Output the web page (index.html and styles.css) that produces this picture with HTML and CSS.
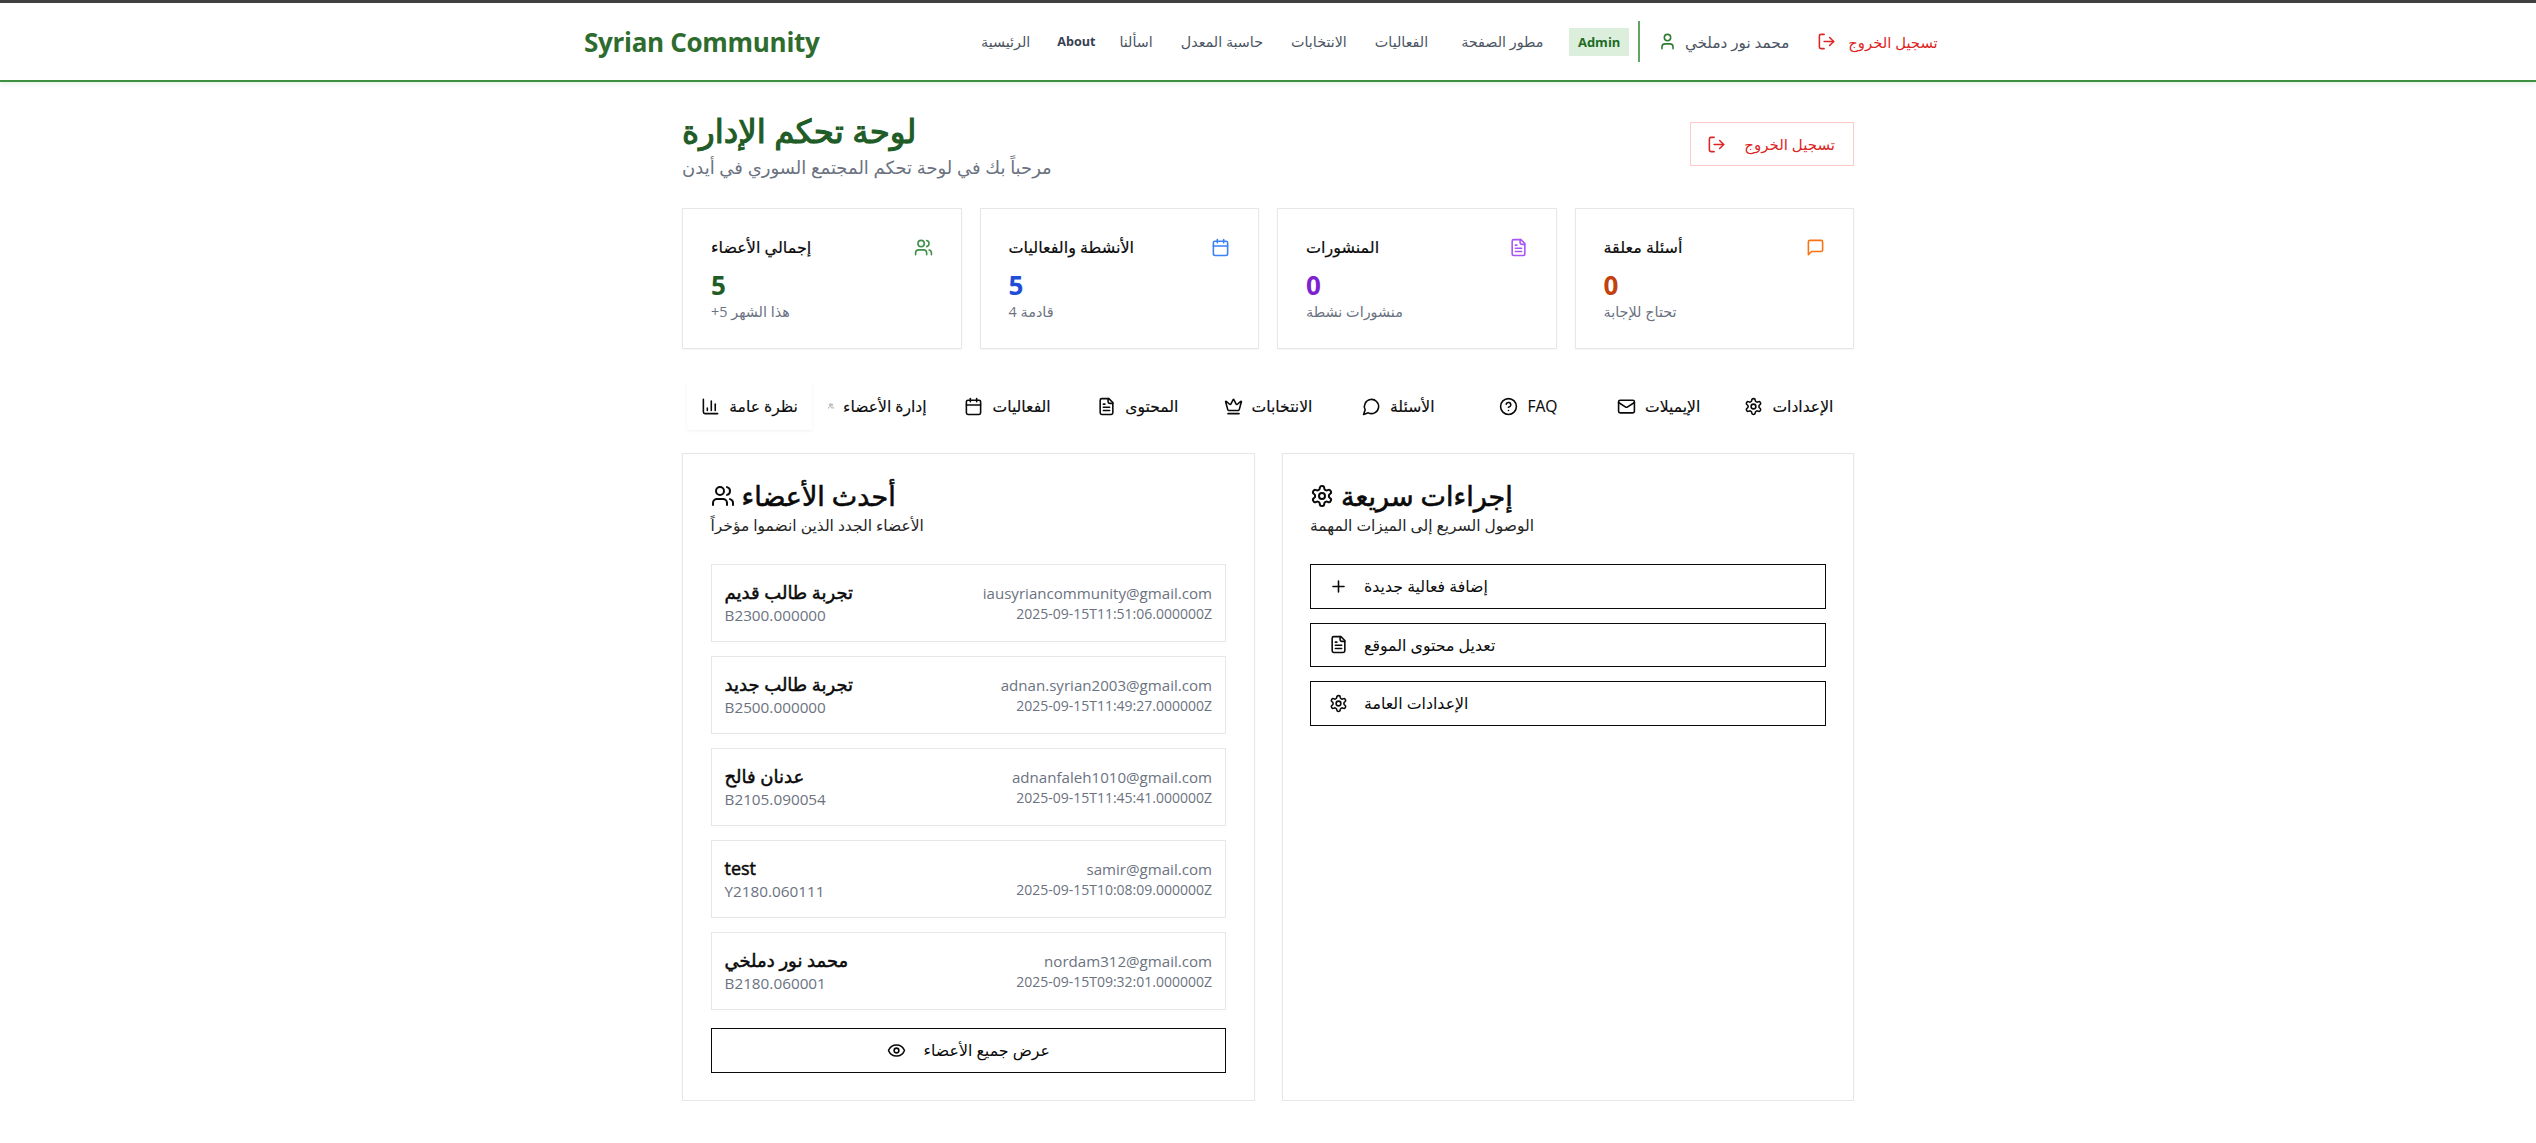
FILE: index.html
```html
<!DOCTYPE html>
<html lang="ar">
<head>
  <meta charset="UTF-8">
  <title>لوحة تحكم الإدارة</title>
  <link rel="stylesheet" href="styles.css">
</head>
<body>
  <svg class="sprite" xmlns="http://www.w3.org/2000/svg">
    <symbol id="i-users" viewBox="0 0 24 24"><path d="M16 21v-2a4 4 0 0 0-4-4H6a4 4 0 0 0-4 4v2"/><circle cx="9" cy="7" r="4"/><path d="M22 21v-2a4 4 0 0 0-3-3.87"/><path d="M16 3.13a4 4 0 0 1 0 7.75"/></symbol>
    <symbol id="i-user" viewBox="0 0 24 24"><path d="M19 21v-2a4 4 0 0 0-4-4H9a4 4 0 0 0-4 4v2"/><circle cx="12" cy="7" r="4"/></symbol>
    <symbol id="i-logout" viewBox="0 0 24 24"><path d="M9 21H5a2 2 0 0 1-2-2V5a2 2 0 0 1 2-2h4"/><path d="m16 17 5-5-5-5"/><path d="M21 12H9"/></symbol>
    <symbol id="i-calendar" viewBox="0 0 24 24"><path d="M8 2v4"/><path d="M16 2v4"/><rect x="3" y="4" width="18" height="18" rx="2"/><path d="M3 10h18"/></symbol>
    <symbol id="i-file" viewBox="0 0 24 24"><path d="M15 2H6a2 2 0 0 0-2 2v16a2 2 0 0 0 2 2h12a2 2 0 0 0 2-2V7Z"/><path d="M14 2v4a2 2 0 0 0 2 2h4"/><path d="M10 9H8"/><path d="M16 13H8"/><path d="M16 17H8"/></symbol>
    <symbol id="i-square" viewBox="0 0 24 24"><path d="M21 15a2 2 0 0 1-2 2H7l-4 4V5a2 2 0 0 1 2-2h14a2 2 0 0 1 2 2z"/></symbol>
    <symbol id="i-circle" viewBox="0 0 24 24"><path d="M7.9 20A9 9 0 1 0 4 16.1L2 22Z"/></symbol>
    <symbol id="i-chart" viewBox="0 0 24 24"><path d="M3 3v16a2 2 0 0 0 2 2h16"/><path d="M18 17V9"/><path d="M13 17V5"/><path d="M8 17v-3"/></symbol>
    <symbol id="i-crown" viewBox="0 0 24 24"><path d="M11.562 3.266a.5.5 0 0 1 .876 0L15.39 8.87a1 1 0 0 0 1.516.294L21.183 5.5a.5.5 0 0 1 .798.519l-2.834 10.246a1 1 0 0 1-.956.734H5.81a1 1 0 0 1-.957-.734L2.02 6.02a.5.5 0 0 1 .798-.519l4.276 3.664a1 1 0 0 0 1.516-.294z"/><path d="M5 21h14"/></symbol>
    <symbol id="i-help" viewBox="0 0 24 24"><circle cx="12" cy="12" r="10"/><path d="M9.09 9a3 3 0 0 1 5.83 1c0 2-3 3-3 3"/><path d="M12 17h.01"/></symbol>
    <symbol id="i-mail" viewBox="0 0 24 24"><rect x="2" y="4" width="20" height="16" rx="2"/><path d="m22 7-8.97 5.7a1.94 1.94 0 0 1-2.06 0L2 7"/></symbol>
    <symbol id="i-settings" viewBox="0 0 24 24"><path d="M12.22 2h-.44a2 2 0 0 0-2 2v.18a2 2 0 0 1-1 1.73l-.43.25a2 2 0 0 1-2 0l-.15-.08a2 2 0 0 0-2.73.73l-.22.38a2 2 0 0 0 .73 2.73l.15.1a2 2 0 0 1 1 1.72v.51a2 2 0 0 1-1 1.74l-.15.09a2 2 0 0 0-.73 2.73l.22.38a2 2 0 0 0 2.73.73l.15-.08a2 2 0 0 1 2 0l.43.25a2 2 0 0 1 1 1.73V20a2 2 0 0 0 2 2h.44a2 2 0 0 0 2-2v-.18a2 2 0 0 1 1-1.73l.43-.25a2 2 0 0 1 2 0l.15.08a2 2 0 0 0 2.73-.73l.22-.39a2 2 0 0 0-.73-2.73l-.15-.08a2 2 0 0 1-1-1.74v-.5a2 2 0 0 1 1-1.74l.15-.09a2 2 0 0 0 .73-2.73l-.22-.38a2 2 0 0 0-2.73-.73l-.15.08a2 2 0 0 1-2 0l-.43-.25a2 2 0 0 1-1-1.73V4a2 2 0 0 0-2-2z"/><circle cx="12" cy="12" r="3"/></symbol>
    <symbol id="i-plus" viewBox="0 0 24 24"><path d="M5 12h14"/><path d="M12 5v14"/></symbol>
    <symbol id="i-eye" viewBox="0 0 24 24"><path d="M2.062 12.348a1 1 0 0 1 0-.696 10.75 10.75 0 0 1 19.876 0 1 1 0 0 1 0 .696 10.75 10.75 0 0 1-19.876 0"/><circle cx="12" cy="12" r="3"/></symbol>
  </svg>

  <!-- الشريط العلوي -->
  <header class="site-header">
    <div class="header-inner">
      <a class="logo" href="#">Syrian Community</a>
      <nav class="main-nav">
        <a href="#">الرئيسية</a>
        <a class="nav-strong" href="#">About</a>
        <a href="#">اسألنا</a>
        <a href="#">حاسبة المعدل</a>
        <a href="#">الانتخابات</a>
        <a href="#">الفعاليات</a>
        <a class="nav-dev" href="#">مطور الصفحة</a>
      </nav>
      <span class="role-badge">Admin</span>
      <div class="user-box">
        <svg class="icon icon-user"><use href="#i-user"/></svg>
        <span class="user-name">محمد نور دملخي</span>
      </div>
      <a class="header-logout" href="#">
        <svg class="icon"><use href="#i-logout"/></svg>
        <span>تسجيل الخروج</span>
      </a>
    </div>
  </header>

  <main class="container">
    <section class="page-head">
      <div>
        <h1>لوحة تحكم الإدارة</h1>
        <p class="page-sub">مرحباً بك في لوحة تحكم المجتمع السوري في أيدن</p>
      </div>
      <a class="logout-btn" href="#">
        <svg class="icon"><use href="#i-logout"/></svg>
        <span>تسجيل الخروج</span>
      </a>
    </section>

    <!-- البطاقات -->
    <section class="stats">
      <div class="stat-card">
        <div class="stat-top"><span>إجمالي الأعضاء</span><svg class="icon c-green"><use href="#i-users"/></svg></div>
        <div class="stat-num n-green">5</div>
        <div class="stat-note">+5 هذا الشهر</div>
      </div>
      <div class="stat-card">
        <div class="stat-top"><span>الأنشطة والفعاليات</span><svg class="icon c-blue"><use href="#i-calendar"/></svg></div>
        <div class="stat-num n-blue">5</div>
        <div class="stat-note">4 قادمة</div>
      </div>
      <div class="stat-card">
        <div class="stat-top"><span>المنشورات</span><svg class="icon c-purple"><use href="#i-file"/></svg></div>
        <div class="stat-num n-purple">0</div>
        <div class="stat-note">منشورات نشطة</div>
      </div>
      <div class="stat-card">
        <div class="stat-top"><span>أسئلة معلقة</span><svg class="icon c-orange"><use href="#i-square"/></svg></div>
        <div class="stat-num n-orange">0</div>
        <div class="stat-note">تحتاج للإجابة</div>
      </div>
    </section>

    <!-- التبويبات -->
    <nav class="tabs">
      <a class="tab active" href="#"><svg class="icon"><use href="#i-chart"/></svg><span>نظرة عامة</span></a>
      <a class="tab" href="#"><svg class="icon icon-tiny"><use href="#i-users"/></svg><span>إدارة الأعضاء</span></a>
      <a class="tab" href="#"><svg class="icon"><use href="#i-calendar"/></svg><span>الفعاليات</span></a>
      <a class="tab" href="#"><svg class="icon"><use href="#i-file"/></svg><span>المحتوى</span></a>
      <a class="tab" href="#"><svg class="icon"><use href="#i-crown"/></svg><span>الانتخابات</span></a>
      <a class="tab" href="#"><svg class="icon"><use href="#i-circle"/></svg><span>الأسئلة</span></a>
      <a class="tab" href="#"><svg class="icon"><use href="#i-help"/></svg><span>FAQ</span></a>
      <a class="tab" href="#"><svg class="icon"><use href="#i-mail"/></svg><span>الإيميلات</span></a>
      <a class="tab" href="#"><svg class="icon"><use href="#i-settings"/></svg><span>الإعدادات</span></a>
    </nav>

    <section class="panels">
      <div class="panel">
        <h2><svg class="icon"><use href="#i-users"/></svg><span>أحدث الأعضاء</span></h2>
        <p class="panel-sub">الأعضاء الجدد الذين انضموا مؤخراً</p>
        <div class="member-list">
          <div class="member">
            <div><div class="member-name">تجربة طالب قديم</div><div class="member-code">B2300.000000</div></div>
            <div class="member-meta"><div class="member-mail">iausyriancommunity@gmail.com</div><div class="member-date">2025-09-15T11:51:06.000000Z</div></div>
          </div>
          <div class="member">
            <div><div class="member-name">تجربة طالب جديد</div><div class="member-code">B2500.000000</div></div>
            <div class="member-meta"><div class="member-mail">adnan.syrian2003@gmail.com</div><div class="member-date">2025-09-15T11:49:27.000000Z</div></div>
          </div>
          <div class="member">
            <div><div class="member-name">عدنان فالح</div><div class="member-code">B2105.090054</div></div>
            <div class="member-meta"><div class="member-mail">adnanfaleh1010@gmail.com</div><div class="member-date">2025-09-15T11:45:41.000000Z</div></div>
          </div>
          <div class="member">
            <div><div class="member-name">test</div><div class="member-code">Y2180.060111</div></div>
            <div class="member-meta"><div class="member-mail">samir@gmail.com</div><div class="member-date">2025-09-15T10:08:09.000000Z</div></div>
          </div>
          <div class="member">
            <div><div class="member-name">محمد نور دملخي</div><div class="member-code">B2180.060001</div></div>
            <div class="member-meta"><div class="member-mail">nordam312@gmail.com</div><div class="member-date">2025-09-15T09:32:01.000000Z</div></div>
          </div>
        </div>
        <a class="outline-btn center" href="#"><svg class="icon"><use href="#i-eye"/></svg><span>عرض جميع الأعضاء</span></a>
      </div>

      <div class="panel">
        <h2><svg class="icon"><use href="#i-settings"/></svg><span>إجراءات سريعة</span></h2>
        <p class="panel-sub">الوصول السريع إلى الميزات المهمة</p>
        <div class="action-list">
          <a class="outline-btn" href="#"><svg class="icon"><use href="#i-plus"/></svg><span>إضافة فعالية جديدة</span></a>
          <a class="outline-btn" href="#"><svg class="icon"><use href="#i-file"/></svg><span>تعديل محتوى الموقع</span></a>
          <a class="outline-btn" href="#"><svg class="icon"><use href="#i-settings"/></svg><span>الإعدادات العامة</span></a>
        </div>
      </div>
    </section>
  </main>
</body>
</html>
```

FILE: styles.css
```css
/* عام */
* {
  box-sizing: border-box;
}

body {
  margin: 0;
  background-color: #FFFFFF;
  color: #0A0A0A;
  font-family: "Open Sans", "DejaVu Sans", sans-serif;
  font-size: 15px;
}

a {
  color: inherit;
  text-decoration: none;
}

h1, h2, p {
  margin: 0;
}

.sprite {
  display: none;
}

.icon {
  width: 19px;
  height: 19px;
  flex: none;
  fill: none;
  stroke: currentColor;
  stroke-width: 2;
  stroke-linecap: round;
  stroke-linejoin: round;
}

/* الشريط العلوي */
.site-header {
  height: 82px;
  border-top: 3px solid #404040;
  border-bottom: 2px solid #3F9142;
  box-shadow: 0 2px 4px rgba(63, 145, 66, 0.12);
}

.header-inner {
  display: flex;
  align-items: center;
  height: 100%;
  padding-left: 584px;
}

.logo {
  width: 397px;
  font-size: 26px;
  font-weight: 700;
  letter-spacing: -0.3px;
  color: #2E6B2E;
}

.main-nav {
  display: flex;
  align-items: center;
  gap: 28px;
  font-size: 14.3px;
  color: #4B5563;
}

.nav-strong {
  margin-left: -1px;
  margin-right: -4px;
  font-size: 12.6px;
  font-weight: 700;
  color: #374151;
}

.nav-dev {
  margin-left: 5px;
}

.role-badge {
  margin-left: 26px;
  padding: 5px 8.5px;
  background-color: #DCEFDC;
  color: #1F6B24;
  font-size: 13px;
  font-weight: 700;
}

.user-box {
  display: flex;
  align-items: center;
  gap: 8px;
  height: 41px;
  margin-left: 9px;
  padding-left: 18px;
  border-left: 2px solid #5FA463;
  color: #4B5563;
  font-size: 15.2px;
}

.icon-user {
  color: #2E7D32;
}

.header-logout {
  display: flex;
  align-items: center;
  gap: 12px;
  margin-left: 28px;
  color: #DC2626;
  font-size: 14.8px;
}

/* رأس الصفحة */
.container {
  width: 1172px;
  margin: 0 auto;
}

.page-head {
  display: flex;
  justify-content: space-between;
  align-items: center;
  padding-top: 26px;
}

h1 {
  font-size: 32.5px;
  line-height: 46px;
  font-weight: 400;
  -webkit-text-stroke: 1.1px #1F5C27;
  color: #1F5C27;
}

.page-sub {
  font-size: 18px;
  line-height: 26px;
  color: #6B7280;
}

.logout-btn {
  display: flex;
  align-items: center;
  gap: 18px;
  height: 44px;
  padding: 0 18px 0 16px;
  border: 1px solid #FECACA;
  color: #DC2626;
  font-size: 15px;
}

/* البطاقات */
.stats {
  display: grid;
  grid-template-columns: repeat(4, 1fr);
  gap: 18px;
  margin-top: 28px;
}

.stat-card {
  height: 141px;
  padding: 27px 28px;
  border: 1px solid #E5E7EB;
  box-shadow: 0 1px 2px rgba(0, 0, 0, 0.04);
}

.stat-top {
  display: flex;
  justify-content: space-between;
  align-items: center;
  font-size: 16px;
  -webkit-text-stroke: 0.2px #0A0A0A;
}

.stat-num {
  margin-top: 10px;
  font-size: 26px;
  line-height: 34px;
  font-weight: 700;
}

.stat-note {
  font-size: 14.4px;
  line-height: 20px;
  color: #6B7280;
}

.c-green { color: #3F8F47; }
.c-blue { color: #3B82F6; }
.c-purple { color: #A855F7; }
.c-orange { color: #F97316; }

.n-green { color: #1F5C27; }
.n-blue { color: #1D4ED8; }
.n-purple { color: #7E22CE; }
.n-orange { color: #C2410C; }

/* التبويبات */
.tabs {
  display: grid;
  grid-template-columns: repeat(9, 1fr);
  margin-top: 33px;
  height: 48px;
  font-size: 15.6px;
  -webkit-text-stroke: 0.15px #0A0A0A;
}

.tab {
  display: flex;
  justify-content: center;
  align-items: center;
  gap: 9px;
}

.tab.active {
  margin-left: 5px;
  box-shadow: 0 1px 3px rgba(0, 0, 0, 0.06);
}

.tab .icon-tiny {
  width: 6px;
  height: 6px;
  color: #777777;
}

/* اللوحات */
.panels {
  display: grid;
  grid-template-columns: 1fr 1fr;
  gap: 27px;
  margin-top: 23px;
}

.panel {
  height: 648px;
  padding: 24px 27.5px;
  border: 1px solid #E5E7EB;
  box-shadow: 0 1px 2px rgba(0, 0, 0, 0.04);
}

.panel h2 {
  display: flex;
  align-items: center;
  gap: 7px;
  font-size: 27px;
  line-height: 36px;
  font-weight: 400;
  -webkit-text-stroke: 0.6px #0A0A0A;
}

.panel h2 .icon {
  width: 24px;
  height: 24px;
}

.panel-sub {
  font-size: 15.5px;
  line-height: 22px;
  color: #262626;
}

.member-list {
  display: flex;
  flex-direction: column;
  gap: 14px;
  margin-top: 28px;
}

.member {
  display: flex;
  justify-content: space-between;
  align-items: center;
  height: 78px;
  padding: 0 13px;
  border: 1px solid #E5E7EB;
}

.member-name {
  font-size: 18px;
  line-height: 25px;
  -webkit-text-stroke: 0.5px #0A0A0A;
}

.member-code {
  font-size: 15.3px;
  line-height: 21px;
  color: #6B7280;
}

.member-meta {
  text-align: right;
}

.member-mail {
  font-size: 15.1px;
  line-height: 21px;
  color: #6B7280;
}

.member-date {
  font-size: 14px;
  line-height: 19px;
  color: #6B7280;
}

.outline-btn {
  display: flex;
  align-items: center;
  gap: 16px;
  height: 44.5px;
  padding: 0 18px;
  border: 1px solid #0A0A0A;
  font-size: 15.8px;
}

.outline-btn.center {
  justify-content: center;
  gap: 18px;
  margin-top: 18px;
}

.action-list {
  display: flex;
  flex-direction: column;
  gap: 14px;
  margin-top: 28px;
}
```
